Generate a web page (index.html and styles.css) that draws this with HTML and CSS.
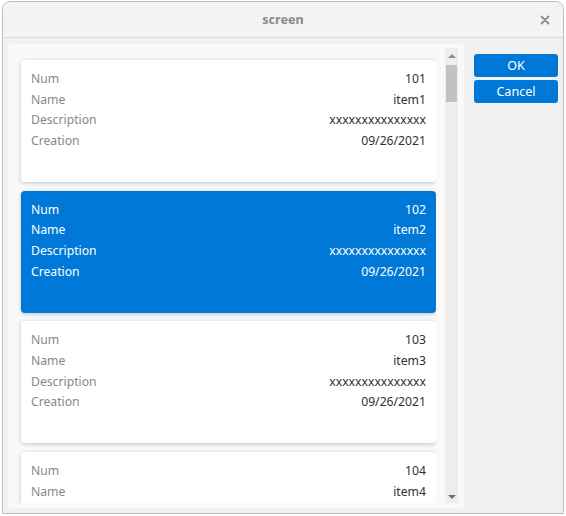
FILE: index.html
```html
<!DOCTYPE html>
<html>
	<head>
		<meta charset="UTF-8">
		<title>screen</title>
		<link rel="stylesheet" href="styles.css">
	</head>
	<body>
		<div class="window">
			<div class="titlebar">
				<span class="title">screen</span>
				<span class="close">
					<svg width="10" height="10" viewBox="0 0 10 10"><path d="M1.5 1.5 L8.5 8.5 M8.5 1.5 L1.5 8.5" stroke="#8c8c8c" stroke-width="1.8" stroke-linecap="round"/></svg>
				</span>
			</div>
			<div class="content">
				<div class="panel">
					<div class="viewport">
						<div class="card">
							<div class="row"><span class="label">Num</span><span class="value">101</span></div>
							<div class="row"><span class="label">Name</span><span class="value">item1</span></div>
							<div class="row"><span class="label">Description</span><span class="value">xxxxxxxxxxxxxxx</span></div>
							<div class="row"><span class="label">Creation</span><span class="value">09/26/2021</span></div>
						</div>
						<div class="card selected">
							<div class="row"><span class="label">Num</span><span class="value">102</span></div>
							<div class="row"><span class="label">Name</span><span class="value">item2</span></div>
							<div class="row"><span class="label">Description</span><span class="value">xxxxxxxxxxxxxxx</span></div>
							<div class="row"><span class="label">Creation</span><span class="value">09/26/2021</span></div>
						</div>
						<div class="card">
							<div class="row"><span class="label">Num</span><span class="value">103</span></div>
							<div class="row"><span class="label">Name</span><span class="value">item3</span></div>
							<div class="row"><span class="label">Description</span><span class="value">xxxxxxxxxxxxxxx</span></div>
							<div class="row"><span class="label">Creation</span><span class="value">09/26/2021</span></div>
						</div>
						<div class="card">
							<div class="row"><span class="label">Num</span><span class="value">104</span></div>
							<div class="row"><span class="label">Name</span><span class="value">item4</span></div>
						</div>
					</div>
					<div class="scrollbar">
						<span class="arrow up"></span>
						<div class="track"><div class="thumb"></div></div>
						<span class="arrow down"></span>
					</div>
				</div>
				<div class="buttons">
					<button class="btn">OK</button>
					<button class="btn">Cancel</button>
				</div>
			</div>
		</div>
	</body>
</html>
```

FILE: styles.css
```css
html, body {
	margin: 0;
	padding: 0;
	background: #fff;
	font-family: "Noto Sans", "Open Sans", sans-serif;
	font-size: 12.2px;
}

.window {
	margin: 1px 2px 2px 2px;
	height: 513px;
	box-sizing: border-box;
	border: 1px solid #bcbcbc;
	border-radius: 8px 8px 0 0;
	background: #f1f1f1;
	display: flex;
	flex-direction: column;
	overflow: hidden;
}

.titlebar {
	height: 35px;
	flex: none;
	background: #f4f3f2;
	border-bottom: 1px solid #e2d9d4;
	display: flex;
	align-items: center;
	justify-content: center;
	position: relative;
}

.title {
	color: #8a8a8a;
	font-size: 12.6px;
	font-weight: bold;
}

.close {
	position: absolute;
	right: 13px;
	top: 13px;
	line-height: 0;
}

.content {
	flex: 1;
	display: flex;
	gap: 10px;
	padding: 6px 4px 5px 5px;
	min-height: 0;
}

/* list panel with its own scrollbar */
.panel {
	width: 456px;
	box-sizing: border-box;
	background: #f9f9f9;
	border-radius: 3px;
	padding: 4px 6px 5px 0;
	display: flex;
	gap: 9px;
}

.viewport {
	flex: 1;
	overflow: hidden;
	padding: 12px 0 0 13px;
}

.card {
	height: 122px;
	box-sizing: border-box;
	margin: 0 0 8.7px 0;
	padding: 9px 10px;
	background: #fff;
	border-radius: 4px;
	box-shadow: 0 1px 4px rgba(0, 0, 0, 0.22);
}

.row {
	display: flex;
	justify-content: space-between;
	line-height: 20.7px;
}

.label {
	color: #888;
}

.value {
	color: #303030;
}

.card.selected {
	background: #0078d7;
}

.card.selected .label,
.card.selected .value {
	color: #fff;
}

.scrollbar {
	width: 13px;
	background: #eeeeee;
	display: flex;
	flex-direction: column;
	align-items: center;
}

.track {
	flex: 1;
	width: 100%;
}

.thumb {
	margin: 7px 1px 0 1px;
	height: 37px;
	background: #c2c2c2;
}

.arrow {
	width: 0;
	height: 0;
	border-left: 4px solid transparent;
	border-right: 4px solid transparent;
}

.arrow.up {
	margin-top: 6px;
	border-bottom: 4px solid #8a8a8a;
}

.arrow.down {
	margin-bottom: 4px;
	border-top: 4px solid #6e6e6e;
}

.buttons {
	width: 84px;
	display: flex;
	flex-direction: column;
	gap: 3px;
	padding-top: 10px;
}

.btn {
	height: 23px;
	border: none;
	border-radius: 3px;
	background: #0078d7;
	color: #fff;
	font-family: "Noto Sans", "Open Sans", sans-serif;
	font-size: 12.6px;
	padding: 0;
}
```
